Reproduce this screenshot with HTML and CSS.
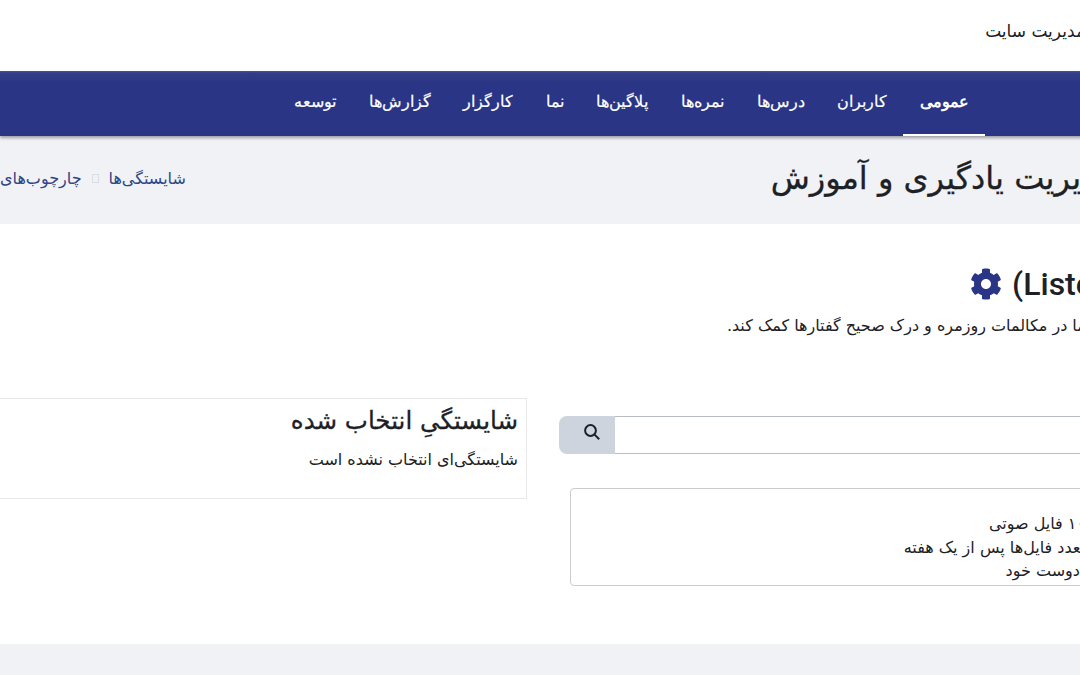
FILE: index.html
```html
<!DOCTYPE html>
<html lang="fa">
<head>
    <meta charset="UTF-8">
    <title>مدیریت یادگیری و آموزش</title>
    <link rel="stylesheet" href="styles.css">
</head>
<body>
    <div class="viewport">
        <div class="page" dir="rtl">
            <header class="topbar">
                <span class="site-link">مدیریت سایت</span>
            </header>

            <nav class="mainnav">
                <a class="nav-item active">عمومی</a>
                <a class="nav-item">کاربران</a>
                <a class="nav-item">درس‌ها</a>
                <a class="nav-item">نمره‌ها</a>
                <a class="nav-item">پلاگین‌ها</a>
                <a class="nav-item">نما</a>
                <a class="nav-item">کارگزار</a>
                <a class="nav-item">گزارش‌ها</a>
                <a class="nav-item">توسعه</a>
            </nav>

            <section class="page-head">
                <h1>مدیریت یادگیری و آموزش</h1>
                <div class="crumbs">
                    <a>شایستگی‌ها</a>
                    <span class="crumb-sep"></span>
                    <a>چارچوب‌های</a>
                </div>
            </section>

            <main class="content">
                <h2 class="course-title">
                    <span dir="ltr">(Listening)</span>
                    <svg class="gear" viewBox="0 0 512 512"><path d="M487.4 315.7l-42.6-24.6c4.3-23.2 4.3-47 0-70.2l42.6-24.6c4.9-2.8 7.1-8.6 5.5-14-11.1-35.6-30-67.8-54.7-94.6-3.8-4.1-10-5.1-14.8-2.3L380.8 110c-17.9-15.4-38.5-27.3-60.8-35.1V25.8c0-5.6-3.9-10.5-9.4-11.7-36.7-8.2-74.3-7.8-109.2 0-5.5 1.2-9.4 6.1-9.4 11.7V75c-22.2 7.9-42.8 19.8-60.8 35.1L88.7 85.5c-4.9-2.8-11-1.9-14.8 2.3-24.7 26.7-43.6 58.9-54.7 94.6-1.7 5.4.6 11.2 5.5 14L67.3 221c-4.3 23.2-4.3 47 0 70.2l-42.6 24.6c-4.9 2.8-7.1 8.6-5.5 14 11.1 35.6 30 67.8 54.7 94.6 3.8 4.1 10 5.1 14.8 2.3l42.6-24.6c17.9 15.4 38.5 27.3 60.8 35.1v49.2c0 5.6 3.9 10.5 9.4 11.7 36.7 8.2 74.3 7.8 109.2 0 5.5-1.2 9.4-6.1 9.4-11.7v-49.2c22.2-7.9 42.8-19.8 60.8-35.1l42.6 24.6c4.9 2.8 11 1.9 14.8-2.3 24.7-26.7 43.6-58.9 54.7-94.6 1.5-5.5-.7-11.3-5.6-14.1zM256 336c-44.1 0-80-35.9-80-80s35.9-80 80-80 80 35.9 80 80-35.9 80-80 80z"/></svg>
                </h2>
                <p class="course-desc">به شما در مکالمات روزمره و درک صحیح گفتارها کمک کند.</p>

                <div class="columns">
                    <div class="col-main">
                        <div class="search">
                            <input class="search-input" type="text">
                            <span class="search-btn">
                                <svg viewBox="0 0 18 18" width="18" height="18"><circle cx="7.5" cy="7.5" r="5.4"/><line x1="11.6" y1="11.6" x2="16.2" y2="16.2"/></svg>
                            </span>
                        </div>
                        <div class="info-box">
                            <div>۱۰ فایل صوتی</div>
                            <div>تعدد فایل‌ها پس از یک هفته</div>
                            <div>&nbsp;دوست خود</div>
                        </div>
                    </div>
                    <aside class="selected">
                        <h3>شایستگیِ انتخاب شده</h3>
                        <p>شایستگی‌ای انتخاب نشده است</p>
                    </aside>
                </div>
            </main>

            <footer class="foot"></footer>
        </div>
    </div>
</body>
</html>
```

FILE: styles.css
```css
html, body {
    margin: 0;
    padding: 0;
    background-color: #fff;
}

.viewport {
    width: 1080px;
    height: 675px;
    overflow: hidden;
}

.page {
    width: 1240px;
    font-family: "DejaVu Sans", sans-serif;
    color: #1d2125;
}

.topbar {
    height: 71px;
    display: flex;
    align-items: center;
    padding-right: 155px;
    font-size: 17px;
}

.site-link {
    margin-bottom: 9px;
}

.mainnav {
    height: 65px;
    display: flex;
    align-items: stretch;
    padding-right: 255px;
    background: linear-gradient(#4a5596, #323e88 2px, #2a3685 12px);
    box-shadow: 0 2px 3px rgba(0, 0, 0, 0.35);
    position: relative;
}

.nav-item {
    display: flex;
    align-items: center;
    padding: 0 16.3px 3px;
    color: #fff;
    font-family: "Noto Sans", sans-serif;
    font-size: 15.5px;
    -webkit-text-stroke: 0.2px #fff;
    border-bottom: 2px solid transparent;
}

.nav-item.active {
    font-weight: bold;
    -webkit-text-stroke: 0;
    border-bottom-color: #fff;
}

.page-head {
    height: 88px;
    box-sizing: border-box;
    display: flex;
    align-items: center;
    justify-content: space-between;
    padding-right: 125px;
    background-color: #f0f2f6;
}

.page-head h1 {
    margin: 0 0 4px;
    font-size: 32px;
    font-weight: normal;
    -webkit-text-stroke: 0.3px #1d2125;
}

.crumbs {
    display: flex;
    align-items: center;
    gap: 10px;
    margin-bottom: 4px;
    font-size: 16px;
    color: #2f4585;
}

.crumb-sep {
    width: 5px;
    height: 7px;
    border: 1px solid #d9dce2;
}

.content {
    height: 420px;
    box-sizing: border-box;
    padding-top: 41px;
}

.course-title {
    display: flex;
    align-items: center;
    gap: 10px;
    margin: 0;
    height: 38px;
    padding-right: 74px;
    font-family: Roboto, "DejaVu Sans", sans-serif;
    font-size: 32px;
    font-weight: 500;
}

.gear {
    width: 32px;
    height: 32px;
    fill: #2a3685;
}

.course-desc {
    margin: 13px 0 0;
    padding-right: 122px;
    font-size: 16px;
    line-height: 20px;
}

.columns {
    display: flex;
    gap: 32px;
    margin-top: 62px;
}

.col-main {
    flex: 1;
    padding-top: 18px;
}

.search {
    display: flex;
    height: 38px;
}

.search-input {
    flex: 1;
    box-sizing: border-box;
    border: 1px solid #b8bcc4;
    border-left: 0;
    background: #fff;
    outline: none;
}

.search-btn {
    width: 56px;
    flex: none;
    display: flex;
    align-items: center;
    justify-content: center;
    padding: 0 0 6px 10px;
    box-sizing: border-box;
    background-color: #ced4de;
    border-top-left-radius: 8px;
    border-bottom-left-radius: 8px;
}

.search-btn svg {
    fill: none;
    stroke: #1d2125;
    stroke-width: 2;
}

.info-box {
    margin-top: 34px;
    margin-left: 11px;
    height: 98px;
    box-sizing: border-box;
    padding: 23px 154px 0 0;
    border: 1px solid #ccc;
    border-radius: 4px;
    font-size: 16px;
    line-height: 23.5px;
}

.selected {
    width: 527px;
    flex: none;
    height: 101px;
    box-sizing: border-box;
    padding: 7px 8px 0 0;
    border: 1px solid #e8e8e8;
    border-left: 0;
}

.selected h3 {
    margin: 0;
    font-size: 24.5px;
    line-height: 30px;
    font-weight: normal;
    -webkit-text-stroke: 0.3px #1d2125;
}

.selected p {
    margin: 14px 0 0;
    font-size: 16px;
    line-height: 20px;
}

.foot {
    height: 31px;
    background-color: #f0f2f6;
}
```
